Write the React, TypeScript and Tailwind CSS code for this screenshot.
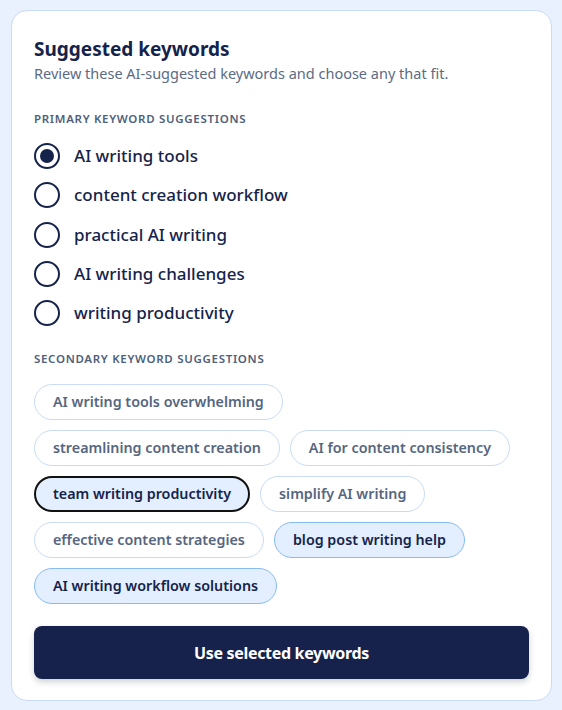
import { useState } from "react";

const primary = [
  "AI writing tools",
  "content creation workflow",
  "practical AI writing",
  "AI writing challenges",
  "writing productivity",
];

const secondary = [
  { label: "AI writing tools overwhelming", state: "off" },
  { label: "streamlining content creation", state: "off" },
  { label: "AI for content consistency", state: "off" },
  { label: "team writing productivity", state: "focus" },
  { label: "simplify AI writing", state: "off" },
  { label: "effective content strategies", state: "off" },
  { label: "blog post writing help", state: "on" },
  { label: "AI writing workflow solutions", state: "on" },
];

export default function App() {
  const [picked, setPicked] = useState(0);

  return (
    <div
      className="min-h-[710px] bg-[#e8f1fd] pl-[11px] pr-[10px] pt-[10px] pb-[9px]"
      style={{ fontFamily: '"Noto Sans", "Open Sans", sans-serif' }}
    >
      <section className="rounded-[16px] border border-[#c9dbf5] bg-white px-[22px] pt-[26px] pb-[21px]">
        <h2 className="text-[19px] font-bold leading-[24px] text-[#15234b]">
          Suggested keywords
        </h2>
        <p className="mt-[2px] text-[14.5px] leading-[20px] text-[#5b6b86]">
          Review these AI-suggested keywords and choose any that fit.
        </p>

        <p className="mt-[28px] text-[11.5px] font-semibold uppercase leading-[16px] tracking-[0.06em] text-[#4e5f7c]">
          Primary keyword suggestions
        </p>
        <div className="mt-[16px] flex flex-col gap-[13.3px]">
          {primary.map((k, i) => (
            <label
              key={k}
              className="flex cursor-pointer items-center gap-[14px]"
              onClick={() => setPicked(i)}
            >
              <span className="flex h-[26px] w-[26px] items-center justify-center rounded-full border-2 border-[#15234b]">
                {picked === i && (
                  <span className="h-[14px] w-[14px] rounded-full bg-[#15234b]" />
                )}
              </span>
              <span className="text-[17px] font-medium leading-[26px] text-[#15234b]">
                {k}
              </span>
            </label>
          ))}
        </div>

        <p className="mt-[25px] text-[11.5px] font-semibold uppercase leading-[16px] tracking-[0.06em] text-[#4e5f7c]">
          Secondary keyword suggestions
        </p>
        <div className="mt-[17px] flex flex-wrap gap-[10px]">
          {secondary.map((c) => (
            <button
              key={c.label}
              className={
                c.state === "focus"
                  ? "h-[36px] rounded-full border-2 border-[#111] bg-[#e3effe] px-[17px] text-[14.3px] font-semibold text-[#15234b]"
                  : c.state === "on"
                  ? "h-[36px] rounded-full border border-[#86bbf4] bg-[#e3effe] px-[18px] text-[14.3px] font-semibold text-[#15234b]"
                  : "h-[36px] rounded-full border border-[#c9dbf5] bg-white px-[18px] text-[14.3px] font-semibold text-[#56667f]"
              }
            >
              {c.label}
            </button>
          ))}
        </div>

        <button className="mt-[22px] h-[53px] w-full rounded-[8px] bg-[#16224b] text-[16px] font-bold tracking-[-0.02em] text-white shadow-[0_3px_6px_rgba(15,23,42,0.2)]">
          Use selected keywords
        </button>
      </section>
    </div>
  );
}
